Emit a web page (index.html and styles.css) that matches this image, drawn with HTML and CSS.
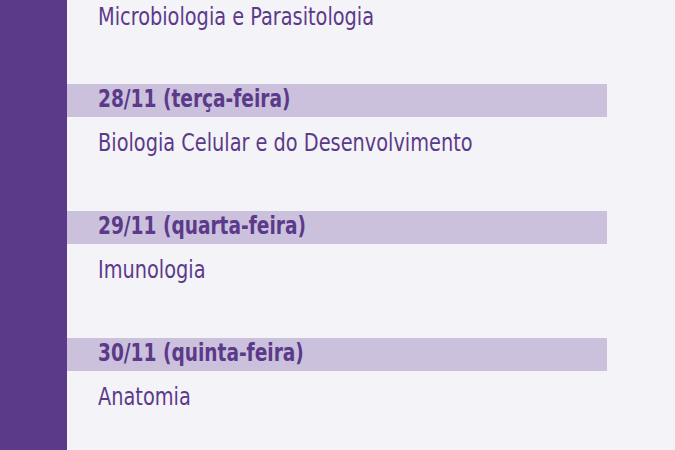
FILE: index.html
```html
<!DOCTYPE html>
<html lang="pt">
<head>
<meta charset="utf-8">
<link rel="stylesheet" href="styles.css">
</head>
<body>
<div class="page">
  <div class="side"></div>
  <main class="list">
    <p class="subject first"><span class="txt">Microbiologia e Parasitologia</span></p>
    <section class="day">
      <h2 class="date"><span class="txt">28/11 (terça-feira)</span></h2>
      <p class="subject"><span class="txt">Biologia Celular e do Desenvolvimento</span></p>
    </section>
    <section class="day">
      <h2 class="date"><span class="txt">29/11 (quarta-feira)</span></h2>
      <p class="subject"><span class="txt">Imunologia</span></p>
    </section>
    <section class="day">
      <h2 class="date"><span class="txt">30/11 (quinta-feira)</span></h2>
      <p class="subject"><span class="txt">Anatomia</span></p>
    </section>
  </main>
</div>
</body>
</html>
```
FILE: styles.css
```css
html, body {
  margin: 0;
  padding: 0;
  background: #f4f3f8;
}
.page {
  display: flex;
  width: 675px;
  height: 450px;
  overflow: hidden;
}
.side {
  width: 67px;
  flex: none;
  background: #5b3a8a;
}
.list {
  flex: 1;
  display: flex;
  flex-direction: column;
}
.list > * {
  flex: none;
}
.txt {
  display: inline-block;
  transform-origin: 0 50%;
  white-space: nowrap;
}
.date {
  margin: 0;
  width: 540px;
  height: 33px;
  box-sizing: border-box;
  background: #cbc1dc;
  padding-left: 31px;
  font-family: "DejaVu Sans Condensed", "DejaVu Sans", sans-serif;
  font-stretch: condensed;
  font-weight: bold;
  font-size: 24px;
  line-height: 31px;
  color: #5b3a8a;
}
.date .txt {
  transform: scaleX(0.86);
}
.subject {
  margin: 0;
  height: 94px;
  padding-left: 31px;
  font-family: "DejaVu Sans Condensed", "DejaVu Sans", sans-serif;
  font-stretch: condensed;
  font-size: 24px;
  line-height: 52px;
  color: #5b3a8a;
}
.subject .txt {
  transform: scaleX(0.895);
}
.subject.first {
  height: 84px;
  line-height: 34px;
}
```
